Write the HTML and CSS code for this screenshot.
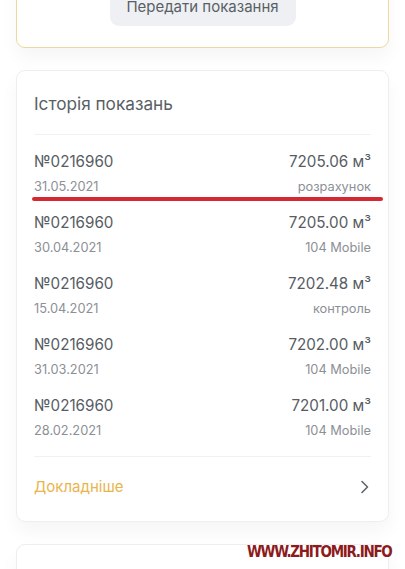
FILE: index.html
```html
<!DOCTYPE html>
<html lang="uk">
<head>
<meta charset="utf-8">
<link rel="stylesheet" href="styles.css">
</head>
<body>
<div class="page">
  <div class="card card-top">
    <button class="btn">Передати показання</button>
  </div>

  <div class="card history">
    <h2 class="title">Історія показань</h2>
    <div class="list">
      <div class="row">
        <div class="line main"><span>№0216960</span><span>7205.06 м³</span></div>
        <div class="line sub"><span>31.05.2021</span><span>розрахунок</span></div>
      </div>
      <div class="row">
        <div class="line main"><span>№0216960</span><span>7205.00 м³</span></div>
        <div class="line sub"><span>30.04.2021</span><span>104 Mobile</span></div>
      </div>
      <div class="row">
        <div class="line main"><span>№0216960</span><span>7202.48 м³</span></div>
        <div class="line sub"><span>15.04.2021</span><span>контроль</span></div>
      </div>
      <div class="row">
        <div class="line main"><span>№0216960</span><span>7202.00 м³</span></div>
        <div class="line sub"><span>31.03.2021</span><span>104 Mobile</span></div>
      </div>
      <div class="row">
        <div class="line main"><span>№0216960</span><span>7201.00 м³</span></div>
        <div class="line sub"><span>28.02.2021</span><span>104 Mobile</span></div>
      </div>
    </div>
    <div class="more">
      <span>Докладніше</span>
      <svg width="12" height="14" viewBox="0 0 12 14"><path d="M3 1.5 L8.5 7 L3 12.5" fill="none" stroke="#5f6670" stroke-width="1.6" stroke-linecap="round" stroke-linejoin="round"/></svg>
    </div>
  </div>

  <div class="card card-bottom"></div>

  <div class="redline"></div>
  <div class="watermark">WWW.ZHITOMIR.INFO</div>
</div>
</body>
</html>
```
FILE: styles.css
```css
* { box-sizing: border-box; }
html, body { margin: 0; padding: 0; background: #fff; }
body { font-family: Inter, "Noto Sans", sans-serif; color: #555a60; overflow: hidden; height: 569px; }
.page { position: relative; padding: 0 16px; height: 569px; display: flow-root; }
.card {
  background: #fff;
  border: 1px solid #eceef0;
  border-radius: 9px;
  box-shadow: 0 10px 18px rgba(0, 0, 0, 0.04);
}
.card-top {
  margin-top: -31px;
  border-color: #efd7a0;
  padding: 16px 0 21px;
  display: flex;
  justify-content: center;
}
.btn {
  width: 186px;
  height: 40px;
  border: none;
  border-radius: 9px;
  background: #eef0f3;
  font-family: Inter, sans-serif;
  font-size: 15px;
  color: #5a5f66;
  padding: 0;
}
.history { margin-top: 22px; padding: 21px 17px 23px; }
.title {
  margin: 0;
  font-size: 17.2px;
  line-height: 24px;
  font-weight: 400;
  color: #5a5f66;
  padding-bottom: 18px;
  border-bottom: 1px solid #f0f1f3;
}
.list { padding-top: 16px; border-bottom: 1px solid #f0f1f3; }
.row { padding-bottom: 15px; display: flex; flex-direction: column; gap: 4px; }
.line { display: flex; justify-content: space-between; }
.main { font-size: 15.2px; line-height: 22px; color: #575c63; }
.sub { font-size: 12.8px; line-height: 20px; color: #8c9096; }
.more {
  padding-top: 19px;
  display: flex;
  justify-content: space-between;
  align-items: center;
  font-size: 15px;
  line-height: 22px;
  color: #e8b54c;
}
.card-bottom { margin-top: 22px; height: 60px; }
.redline {
  position: absolute;
  left: 32px;
  top: 197px;
  width: 351px;
  height: 4px;
  border-radius: 2px;
  background: #d42833;
}
.watermark {
  position: absolute;
  left: 247px;
  top: 543px;
  font-family: "DejaVu Sans Condensed", "DejaVu Sans", sans-serif;
  font-weight: bold;
  font-size: 15px;
  line-height: 18px;
  letter-spacing: -1.3px;
  color: #8d1a1c;
  text-shadow: 0 0 2px #fff;
}
```
